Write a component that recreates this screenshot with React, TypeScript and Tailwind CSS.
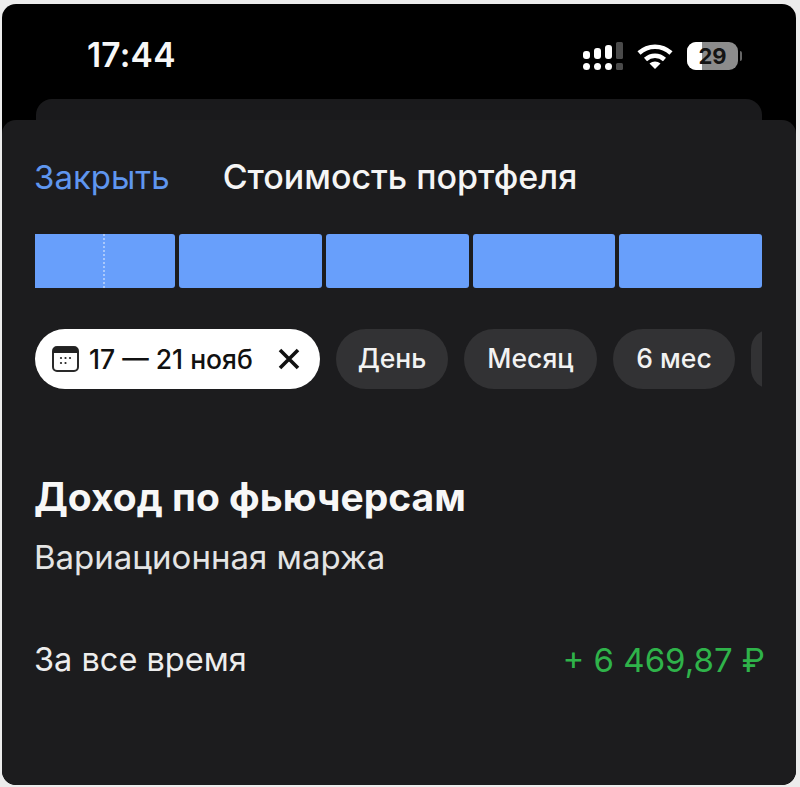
import React from "react";

function Cal() {
  return (
    <svg width="27" height="26" viewBox="0 0 27 26" fill="none" className="shrink-0">
      <rect x="1" y="1" width="25" height="24" rx="4" fill="#fff" stroke="#2a2a2a" strokeWidth="2" />
      <path d="M1 7V5a4 4 0 0 1 4-4h17a4 4 0 0 1 4 4v2z" fill="#222" />
      <g fill="#222">
        <circle cx="13.500" cy="12" r="1.100" /><circle cx="18" cy="12" r="1.100" />
        <circle cx="9" cy="12" r="1.100" />
        <circle cx="9" cy="17" r="1.100" /><circle cx="13.500" cy="17" r="1.100" />
      </g>
    </svg>
  );
}

function Signal() {
  const dots = [0, 1, 2];
  return (
    <svg width="40" height="28" viewBox="0 0 40 28" className="shrink-0">
      <rect x="0" y="9" width="7" height="8" rx="3" fill="#fff" />
      <rect x="11" y="6" width="7" height="11" rx="3" fill="#fff" />
      <rect x="22" y="3" width="7" height="14" rx="3" fill="#fff" />
      <rect x="33" y="0" width="7" height="17" rx="1.500" fill="#4a4a4a" />
      {dots.map((i) => (
        <circle key={i} cx={3.5 + i * 11} cy="24.500" r="3.500" fill="#fff" />
      ))}
      <rect x="33" y="21" width="7" height="7" rx="1.500" fill="#4a4a4a" />
    </svg>
  );
}

function Wifi() {
  return (
    <svg width="36" height="26" viewBox="0 0 36 26" fill="none" className="shrink-0">
      <path d="M2 10C11 1.500 25 1.500 34 10" stroke="#fff" strokeWidth="4.500" />
      <path d="M8.500 16.500c5.500-5 13.500-5 19 0" stroke="#fff" strokeWidth="4.500" />
      <path d="M12.500 20.500c3.200-2.800 7.800-2.800 11 0L18 26z" fill="#fff" />
    </svg>
  );
}

function Battery() {
  return (
    <div className="flex shrink-0 items-center">
      <div className="relative flex h-[28px] w-[51px] items-center justify-center overflow-hidden rounded-[9px] bg-[#8c8c8c]">
        <div className="absolute inset-y-0 left-0 w-[15px] bg-white" />
        <span className="relative text-[22px] font-bold leading-none text-[#141414]">29</span>
      </div>
      <div className="ml-[2px] h-[10px] w-[2px] rounded-r-full bg-[#666]" />
    </div>
  );
}

function Seg({ first }: { first?: boolean }) {
  return (
    <div className={`relative h-[54px] ${first ? "w-[140px] shrink-0 rounded-r-[3px]" : "flex-1 rounded-[3px]"} bg-[#689ffb]`}>
      {first && <div className="absolute inset-y-0 left-[68px] border-l-2 border-dotted border-[#a9c8fb]" />}
    </div>
  );
}

function Chip({ label, w }: { label: string; w: string }) {
  return (
    <div className={`flex h-[60px] shrink-0 items-center justify-center rounded-full bg-[#323234] text-[26.5px] font-medium text-[#f2f2f2] ${w}`}>
      {label}
    </div>
  );
}

export default function App() {
  return (
    <div className="h-[787px] w-[800px] overflow-hidden bg-[#ececec] pb-[2px] pl-[2px] pr-[4px] pt-[4px] font-['Inter',sans-serif] text-white">
      <div className="flex h-full flex-col overflow-hidden rounded-[14px] bg-black">
        <div className="flex h-[95px] shrink-0 items-center pb-[2px] pl-[85px] pr-[54px] pt-[10px]">
          <span className="text-[33.5px] font-semibold leading-none tracking-[0.2px] text-[#f7f7f7]">17:44</span>
          <div className="ml-auto flex items-center">
            <Signal />
            <div className="ml-[14px]"><Wifi /></div>
            <div className="ml-[14px]"><Battery /></div>
          </div>
        </div>
        <div className="mx-[34px] h-[21px] shrink-0 rounded-t-[16px] bg-[#1a1a1c]" />
        <div className="flex flex-1 flex-col rounded-[14px] bg-[#1c1c1e] pl-[33px] pr-[34px]">
          <div className="-ml-px mt-[37px] flex h-[40px] items-center">
            <span className="text-[33px] leading-none text-[#5f96ef]">Закрыть</span>
            <span className="ml-[53px] text-[34px] font-medium leading-none text-[#f5f5f5]">Стоимость портфеля</span>
          </div>
          <div className="mt-[37px] flex gap-[4px]">
            <Seg first />
            <Seg />
            <Seg />
            <Seg />
            <Seg />
          </div>
          <div className="mt-[41px] flex gap-[16px] overflow-hidden">
            <div className="flex h-[60px] w-[285px] shrink-0 items-center rounded-full bg-white pl-[17px] pr-[19px] text-[#111]">
              <Cal />
              <span className="ml-[10px] text-[26.5px] font-medium leading-none">17 — 21 нояб</span>
              <svg width="24" height="24" viewBox="0 0 24 24" className="ml-auto" fill="none" stroke="#111" strokeWidth="3.600">
                <path d="M3 3l18 18M21 3L3 21" />
              </svg>
            </div>
            <Chip label="День" w="w-[112px]" />
            <Chip label="Месяц" w="w-[133px]" />
            <Chip label="6 мес" w="w-[122px]" />
            <div className="h-[60px] w-[40px] shrink-0 rounded-full bg-[#323234]" />
          </div>
          <div className="-ml-px mt-[84px] text-[39px] font-bold leading-[48px] text-[#f7f7f7]">Доход по фьючерсам</div>
          <div className="-ml-px mt-[16px] text-[33px] leading-[40px] text-[#e4e4e4]">Вариационная маржа</div>
          <div className="-ml-px -mr-[3px] mt-[63px] flex items-center justify-between text-[33px] leading-[40px]">
            <span className="text-[32.5px] text-[#ededed]">За все время</span>
            <span className="text-[#2fb34a]">+ 6 469,87 ₽</span>
          </div>
        </div>
      </div>
    </div>
  );
}
